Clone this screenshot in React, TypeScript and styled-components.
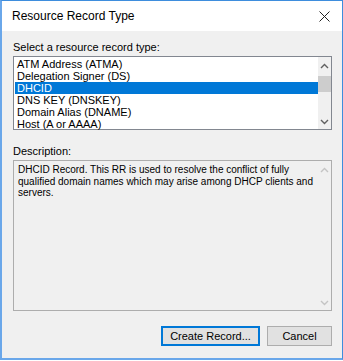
import React, { useState } from "react";
import { styled, createGlobalStyle } from "styled-components";

const recordTypes = [
  "ATM Address (ATMA)",
  "Delegation Signer (DS)",
  "DHCID",
  "DNS KEY (DNSKEY)",
  "Domain Alias (DNAME)",
  "Host (A or AAAA)",
];

const descriptionLines = [
  "DHCID Record. This RR is used to resolve the conflict of fully",
  "qualified domain names which may arise among DHCP clients and",
  "servers.",
];

const GlobalStyle = createGlobalStyle`
  html, body {
    margin: 0;
    padding: 0;
    background: #ffffff;
  }
  body {
    font-family: "Liberation Sans", Arial, sans-serif;
    font-size: 11px;
    color: #000000;
  }
`;

function Chevron({ up, color }: { up?: boolean; color: string }) {
  return (
    <svg width="9" height="6" viewBox="0 0 9 6">
      <path
        d={up ? "M1 5 L4.5 1.5 L8 5" : "M1 1 L4.5 4.5 L8 1"}
        fill="none"
        stroke={color}
        strokeWidth="1.4"
      />
    </svg>
  );
}

export default function App() {
  const [selected, setSelected] = useState(2);

  return (
    <>
      <GlobalStyle />
      <Window>
        <TitleBar>
          <span>Resource Record Type</span>
          <CloseButton aria-label="Close">
            <svg width="11" height="11" viewBox="0 0 11 11">
              <path d="M0.5 0.5 L10.5 10.5 M10.5 0.5 L0.5 10.5" stroke="#222" strokeWidth="1" />
            </svg>
          </CloseButton>
        </TitleBar>

        <Body>
          <Label>Select a resource record type:</Label>
          <ListBox>
            <ul className="items">
              {recordTypes.map((name, i) => (
                <Item key={name} $selected={i === selected} onClick={() => setSelected(i)}>
                  {name}
                </Item>
              ))}
            </ul>
            <ScrollBar>
              <Chevron up color="#606060" />
              <div className="track">
                <Thumb $top={4} $height={16} />
              </div>
              <Chevron color="#606060" />
            </ScrollBar>
          </ListBox>

          <Label $gap={14}>Description:</Label>
          <DescriptionBox>
            <p>
              {descriptionLines.map((line) => (
                <span key={line}>{line}</span>
              ))}
            </p>
            <ScrollBar $disabled>
              <Chevron up color="#c4c4c4" />
              <div className="track" />
              <Chevron color="#c4c4c4" />
            </ScrollBar>
          </DescriptionBox>

          <ButtonRow>
            <Button $default $width={99}>Create Record...</Button>
            <Button $width={65}>Cancel</Button>
          </ButtonRow>
        </Body>
      </Window>
    </>
  );
}

const Window = styled.div`
  width: 340px;
  height: 357px;
  display: flex;
  flex-direction: column;
  border: 1px solid #3e8ddd;
  border-left: 2px solid #6aa7ea;
  border-bottom: 2px solid #6aa7ea;
`;

const TitleBar = styled.header`
  height: 30px;
  padding: 0 10px 0 10px;
  display: flex;
  align-items: center;
  justify-content: space-between;
  background: #ffffff;
  font-size: 12px;
  flex-shrink: 0;
`;

const CloseButton = styled.button`
  width: 14px;
  height: 14px;
  margin-right: 1px;
  padding: 0;
  border: none;
  background: transparent;
  display: flex;
  align-items: center;
  justify-content: center;
`;

const Body = styled.main`
  flex: 1;
  background: #f0f0f0;
  padding: 9px 10px 0 11px;
  display: flex;
  flex-direction: column;
`;

const Label = styled.div<{ $gap?: number }>`
  margin-top: ${({ $gap }) => $gap ?? 0}px;
  height: 14px;
  line-height: 14px;
`;

const ListBox = styled.div`
  margin-top: 2px;
  height: 72px;
  border: 1px solid #828790;
  background: #ffffff;
  display: flex;

  .items {
    flex: 1;
    margin: 0;
    padding: 1px 0 0 1px;
    list-style: none;
  }
`;

const Item = styled.li<{ $selected?: boolean }>`
  height: 12px;
  line-height: 12px;
  padding-left: 2px;
  white-space: nowrap;
  background: ${({ $selected }) => ($selected ? "#0078d7" : "transparent")};
  color: ${({ $selected }) => ($selected ? "#ffffff" : "#000000")};
`;

const ScrollBar = styled.div<{ $disabled?: boolean }>`
  width: 13px;
  background: #f0f0f0;
  display: flex;
  flex-direction: column;
  align-items: center;
  padding: 6px 0 4px;

  .track {
    flex: 1;
    width: 100%;
    position: relative;
    margin: 3px 0;
  }
`;

const Thumb = styled.div<{ $top: number; $height: number }>`
  position: absolute;
  left: 0;
  right: 0;
  top: ${({ $top }) => $top}px;
  height: ${({ $height }) => $height}px;
  background: #cdcdcd;
`;

const DescriptionBox = styled.div`
  margin-top: 2px;
  height: 149px;
  border: 1px solid #adadad;
  background: #f0f0f0;
  display: flex;

  p {
    flex: 1;
    margin: 0;
    padding: 3px 4px;
    font-size: 10px;
    line-height: 11.5px;
    display: flex;
    flex-direction: column;
  }

  span {
    white-space: nowrap;
  }
`;

const ButtonRow = styled.div`
  margin-top: 15px;
  display: flex;
  justify-content: flex-end;
  gap: 7px;
`;

const Button = styled.button<{ $default?: boolean; $width: number }>`
  width: ${({ $width }) => $width}px;
  height: 20px;
  padding: 0;
  font-family: inherit;
  font-size: 11px;
  color: #000000;
  background: #e1e1e1;
  border: ${({ $default }) => ($default ? "2px solid #0078d7" : "1px solid #adadad")};
`;
